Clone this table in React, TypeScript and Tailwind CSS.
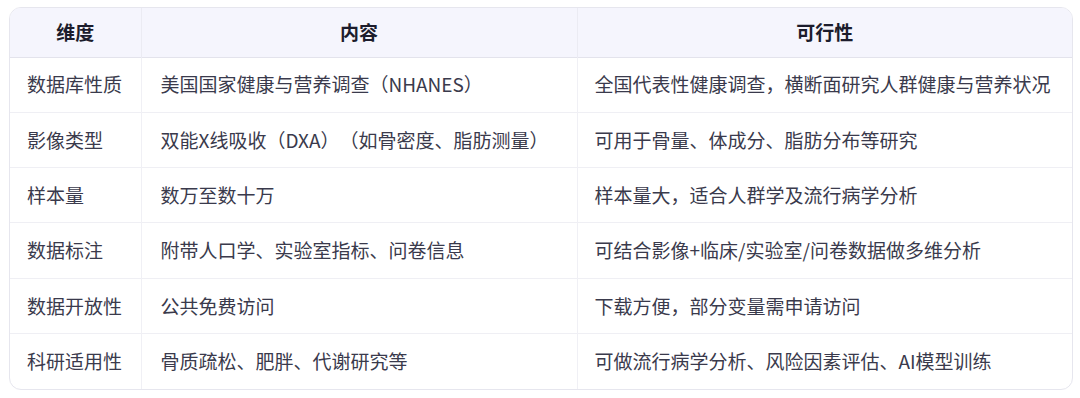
import React from "react";

const rows: [string, string, string][] = [
  ["数据库性质", "美国国家健康与营养调查（NHANES）", "全国代表性健康调查，横断面研究人群健康与营养状况"],
  ["影像类型", "双能X线吸收（DXA）（如骨密度、脂肪测量）", "可用于骨量、体成分、脂肪分布等研究"],
  ["样本量", "数万至数十万", "样本量大，适合人群学及流行病学分析"],
  ["数据标注", "附带人口学、实验室指标、问卷信息", "可结合影像+临床/实验室/问卷数据做多维分析"],
  ["数据开放性", "公共免费访问", "下载方便，部分变量需申请访问"],
  ["科研适用性", "骨质疏松、肥胖、代谢研究等", "可做流行病学分析、风险因素评估、AI模型训练"],
];

export default function App() {
  return (
    <div
      className="w-[1080px] h-[398px] bg-white pt-[7px] pl-[9px] [text-spacing-trim:space-all]"
      style={{ fontFamily: '"Noto Sans CJK SC", "Noto Sans", sans-serif' }}
    >
      <div className="w-[1064px] rounded-[12px] border border-[#e6e6ee] overflow-hidden">
        <table className="w-full border-collapse table-fixed text-[19px] text-[#3a3a4c]">
          <colgroup>
            <col className="w-[131px]" />
            <col className="w-[436px]" />
            <col />
          </colgroup>
          <thead>
            <tr className="h-[49px] bg-[#f5f5fd] border-b border-[#e3e3ec]">
              <th className="font-bold text-[#1c1c2c] text-center border-r border-[#ebebf3]">维度</th>
              <th className="font-bold text-[#1c1c2c] text-center border-r border-[#ebebf3]">内容</th>
              <th className="font-bold text-[#1c1c2c] text-center">可行性</th>
            </tr>
          </thead>
          <tbody>
            {rows.map((r, i) => (
              <tr key={i} className={`h-[55.3px] ${i < rows.length - 1 ? "border-b border-[#efeff4]" : ""}`}>
                <td className="pl-[17px] border-r border-[#f0f0f5] whitespace-nowrap">{r[0]}</td>
                <td className="pl-[19px] border-r border-[#f0f0f5] whitespace-nowrap">{r[1]}</td>
                <td className="pl-[17px] whitespace-nowrap">{r[2]}</td>
              </tr>
            ))}
          </tbody>
        </table>
      </div>
    </div>
  );
}
